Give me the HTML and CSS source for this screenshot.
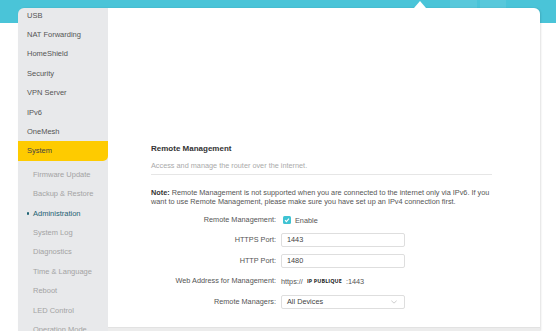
FILE: index.html
```html
<!DOCTYPE html>
<html lang="en">

<head>
    <meta name="viewport" content="width=device-width, initial-scale=1">
    <meta charset="UTF-8">
    <title>Administration</title>
    <link rel="stylesheet" href="styles.css">
</head>

<body>
    <div class="topbar">
        <span class="tile tile-a"></span>
        <span class="tile tile-b"></span>
    </div>

    <div class="panel">
        <nav class="sidebar">
            <ul class="menu">
                <li class="menu-item">USB</li>
                <li class="menu-item">NAT Forwarding</li>
                <li class="menu-item">HomeShield</li>
                <li class="menu-item">Security</li>
                <li class="menu-item">VPN Server</li>
                <li class="menu-item">IPv6</li>
                <li class="menu-item">OneMesh</li>
                <li class="menu-item active">System</li>
                <li class="sub-item">Firmware Update</li>
                <li class="sub-item">Backup &amp; Restore</li>
                <li class="sub-item current">Administration</li>
                <li class="sub-item">System Log</li>
                <li class="sub-item">Diagnostics</li>
                <li class="sub-item">Time &amp; Language</li>
                <li class="sub-item">Reboot</li>
                <li class="sub-item">LED Control</li>
                <li class="sub-item">Operation Mode</li>
            </ul>
        </nav>

        <main class="content">
            <section class="section">
                <h2 class="section-title">Remote Management</h2>
                <p class="section-desc">Access and manage the router over the internet.</p>
                <p class="note"><b>Note:</b> Remote Management is not supported when you are connected to the internet only via IPv6. If you want to use Remote Management, please make sure you have set up an IPv4 connection first.</p>

                <div class="form">
                    <label class="form-label">Remote Management:</label>
                    <div class="form-field">
                        <span class="checkbox">
                            <svg viewBox="0 0 8 8" width="8" height="8"><path d="M2 4.2 L3.4 5.6 L6 2.6" fill="none" stroke="#fff" stroke-width="1.1" /></svg>
                        </span>
                        <span>Enable</span>
                    </div>

                    <label class="form-label">HTTPS Port:</label>
                    <div class="form-field">
                        <div class="text-input">1443</div>
                    </div>

                    <label class="form-label">HTTP Port:</label>
                    <div class="form-field">
                        <div class="text-input">1480</div>
                    </div>

                    <label class="form-label">Web Address for Management:</label>
                    <div class="form-field address">
                        <span>https://</span>
                        <span class="ip-tag">IP PUBLIQUE</span>
                        <span>:1443</span>
                    </div>

                    <label class="form-label">Remote Managers:</label>
                    <div class="form-field">
                        <div class="text-input select">
                            <span>All Devices</span>
                            <svg viewBox="0 0 8 5" width="6" height="4"><path d="M0.5 0.8 L4 4 L7.5 0.8" fill="none" stroke="#b5b5b5" stroke-width="0.9" /></svg>
                        </div>
                    </div>
                </div>
            </section>
            <div class="content-foot"></div>
        </main>
    </div>
</body>

</html>
```

FILE: styles.css
```css
* {
    margin: 0;
    padding: 0;
    box-sizing: border-box;
}

body {
    font-family: 'Liberation Sans', Arial, sans-serif;
    height: 331px;
    background: #fff;
    color: #555;
    overflow: hidden;
}

/* Bandeau du haut */
.topbar {
    height: 23px;
    background: #4ac4d8;
    position: relative;
}

.tile {
    position: absolute;
    top: 0;
    background: rgba(255, 255, 255, 0.08);
}

.tile-a {
    left: 450px;
    width: 27px;
    height: 10px;
}

.tile-b {
    left: 480px;
    width: 26px;
    height: 12px;
}

.panel {
    position: relative;
    display: flex;
    width: 522px;
    height: 323px;
    margin: -15px 0 0 18px;
    box-shadow: 1px 0 2px rgba(0, 0, 0, 0.12);
    border-radius: 6px 6px 0 0;
}

/* petite fleche sous l'onglet actif */
.panel:before {
    content: '';
    position: absolute;
    top: -7px;
    left: 396px;
    border-left: 6px solid transparent;
    border-right: 6px solid transparent;
    border-bottom: 7px solid #fff;
}

.sidebar {
    width: 90px;
    flex-shrink: 0;
    background: #e8e9eb;
    border-top-left-radius: 6px;
    overflow: hidden;
}

.menu {
    list-style: none;
    margin-top: -2.4px;
    font-size: 7.5px;
}

.menu li {
    height: 19.4px;
    line-height: 19.4px;
    padding-left: 9px;
    white-space: nowrap;
}

.menu-item {
    color: #555;
}

.menu-item.active {
    background: #fecb00;
    color: #444;
    border-bottom-right-radius: 5px;
    margin-bottom: 4.2px;
}

.sub-item {
    color: #a3a3a3;
    padding-left: 15px !important;
    position: relative;
}

.sub-item.current {
    color: #1e6273;
}

.sub-item.current:before {
    content: '';
    position: absolute;
    left: 9px;
    top: 8.7px;
    width: 2.2px;
    height: 2.2px;
    border-radius: 50%;
    background: #1e6273;
}

.content {
    flex: 1;
    display: flex;
    flex-direction: column;
    background: #fff;
    border-top-right-radius: 6px;
}

.section {
    flex: 1;
    padding: 135px 48px 0 43px;
}

.section-title {
    font-size: 8px;
    line-height: 12px;
    font-weight: 700;
    color: #333;
}

.section-desc {
    margin-top: 4.5px;
    padding-bottom: 3px;
    font-size: 7.3px;
    line-height: 11px;
    color: #aaa;
    border-bottom: 1px solid #e6e6e6;
}

.note {
    margin-top: 13px;
    font-size: 7.3px;
    line-height: 9.3px;
    color: #555;
}

.note b {
    color: #333;
}

.form {
    display: grid;
    grid-template-columns: 125px 124px;
    column-gap: 5px;
    row-gap: 6.4px;
    margin-top: 7px;
    font-size: 7.3px;
}

.form-label {
    height: 14px;
    line-height: 14px;
    text-align: right;
    white-space: nowrap;
    color: #555;
}

.form-field {
    height: 14px;
    display: flex;
    align-items: center;
    gap: 4px;
    color: #555;
}

.checkbox {
    width: 8px;
    height: 8px;
    margin-left: 2px;
    border-radius: 1.5px;
    background: #3fc3d3;
    display: flex;
}

.text-input {
    width: 100%;
    height: 14px;
    line-height: 12px;
    padding: 0 5px;
    border: 1px solid #dedede;
    border-radius: 2px;
    color: #444;
}

.text-input.select {
    display: flex;
    align-items: center;
    justify-content: space-between;
    padding-right: 7px;
}

.address {
    gap: 4px;
}

.ip-tag {
    font-family: 'Open Sans', sans-serif;
    font-weight: 700;
    font-size: 5.4px;
    color: #222;
    letter-spacing: 0.1px;
}

.content-foot {
    height: 4px;
    background: #ececec;
    border-top: 1px solid #e2e2e2;
}
```
